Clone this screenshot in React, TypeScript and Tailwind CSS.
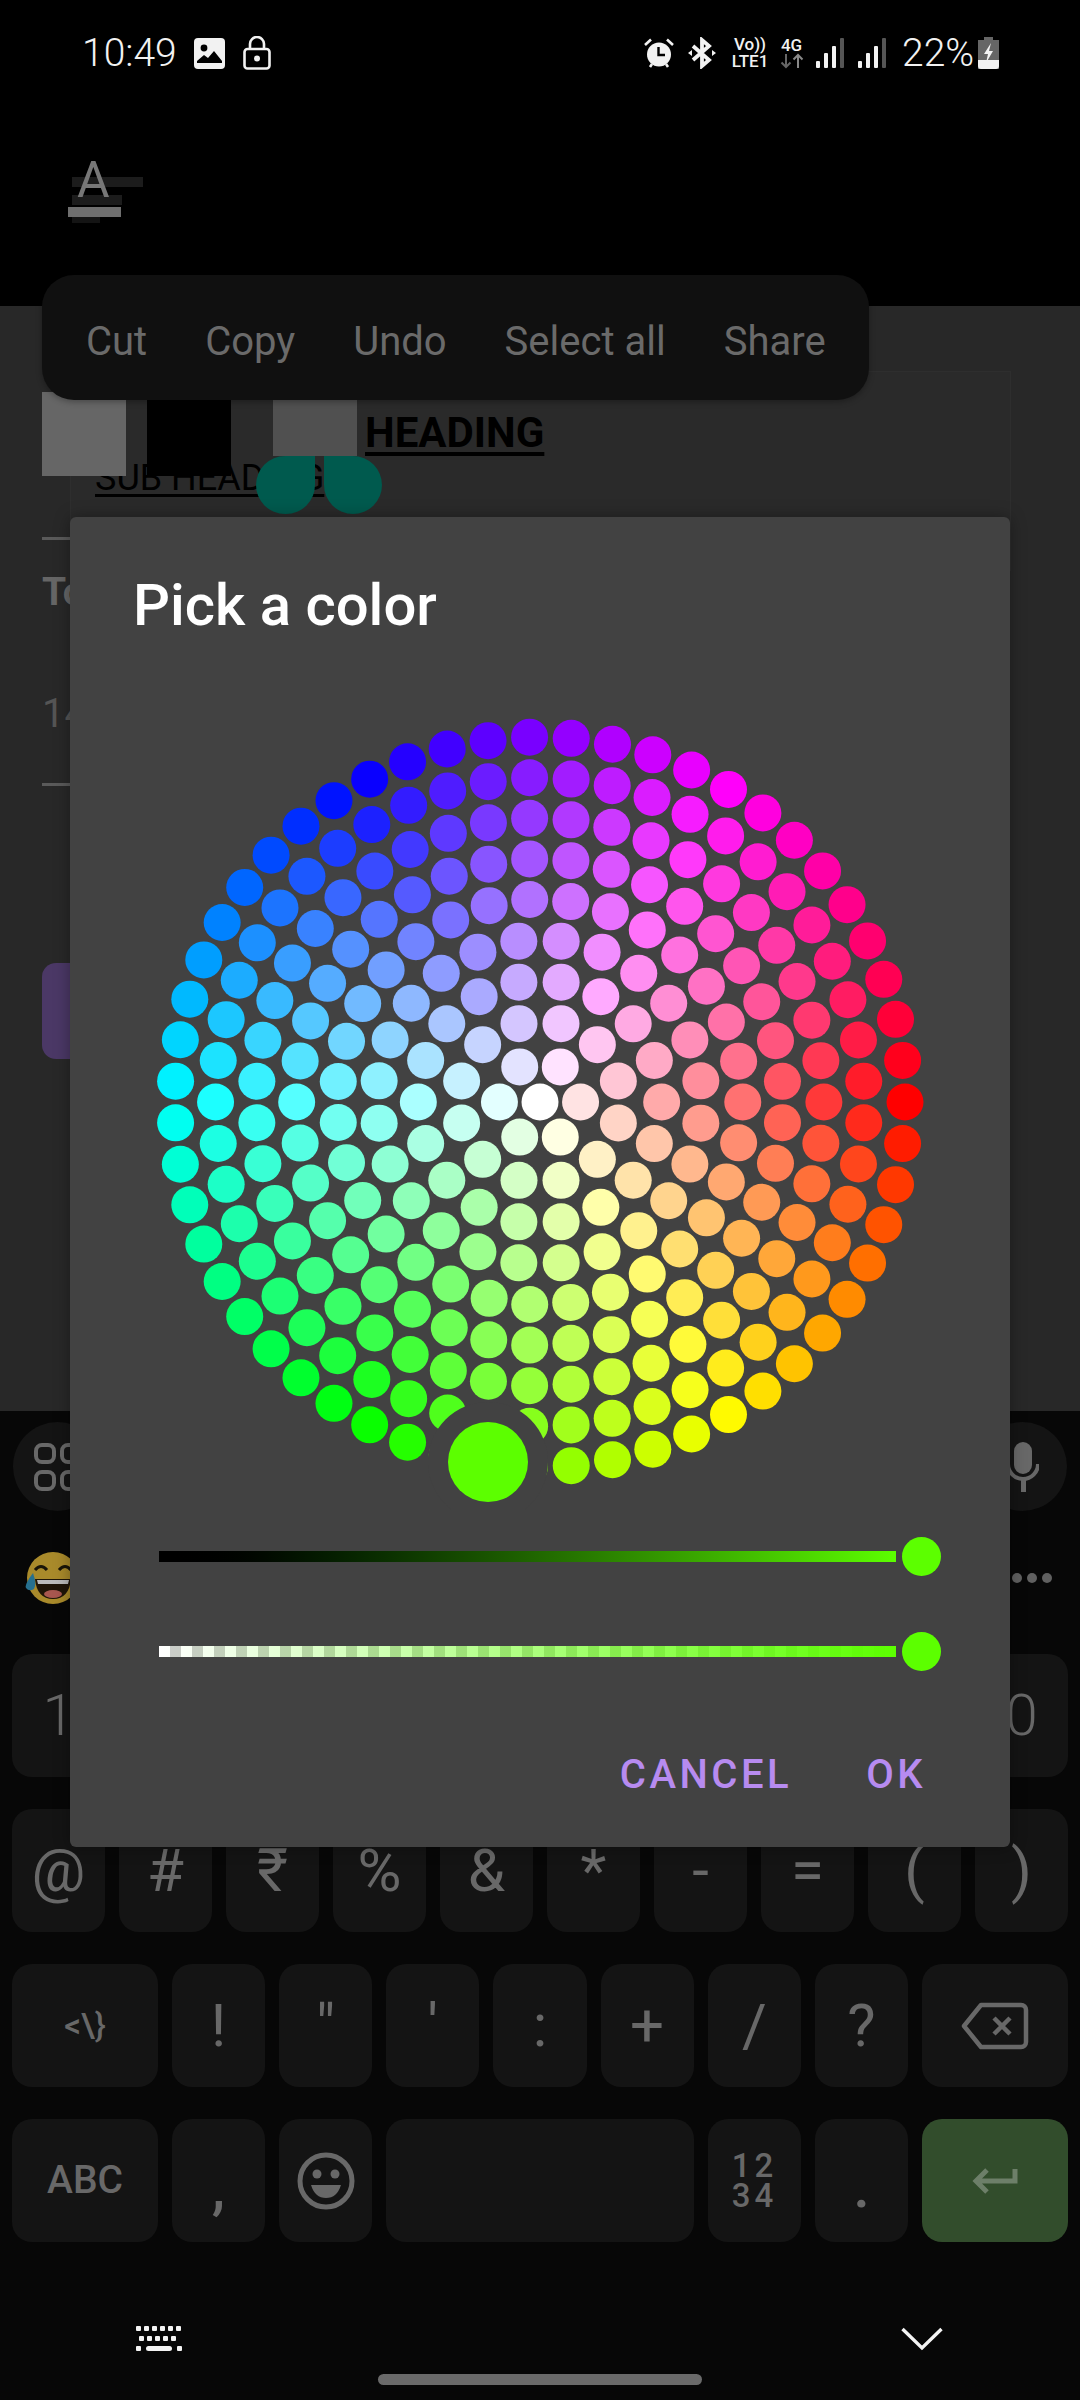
import type { ReactNode } from 'react';

const SIZE = 820;
const HALF = SIZE / 2;
const MAX_RADIUS = 365;
const DENSITY = 10;
const C_SIZE = MAX_RADIUS / (DENSITY - 1) / 2;
const DOT_RADIUS = 18.5;

function hsvToRgb(h: number, s: number, v: number) {
  const f = (n: number) => {
    const k = (n + h / 60) % 6;
    return Math.round(255 * (v - v * s * Math.max(0, Math.min(k, 4 - k, 1))));
  };
  return `rgb(${f(5)},${f(3)},${f(1)})`;
}

function buildDots() {
  const dots: { x: number; y: number; fill: string }[] = [];
  for (let i = 0; i < DENSITY; i++) {
    const radius = (MAX_RADIUS * i) / (DENSITY - 1);
    const total = i === 0 ? 1 : Math.max(1, Math.floor((0.975 * Math.PI) / Math.asin(C_SIZE / radius) + 0.5));
    for (let j = 0; j < total; j++) {
      const angle = (Math.PI * 2 * j) / total + (Math.PI / total) * ((i + 1) % 2);
      dots.push({
        x: HALF + radius * Math.cos(angle),
        y: HALF + 2 + radius * Math.sin(angle),
        fill: hsvToRgb((angle * 180) / Math.PI, radius / MAX_RADIUS, 1),
      });
    }
  }
  return dots;
}

function ColorWheel() {
  return (
    <svg width={SIZE} height={SIZE} viewBox={`0 0 ${SIZE} ${SIZE}`} className="shrink-0">
      {buildDots().map((d, i) => (
        <circle key={i} cx={d.x} cy={d.y} r={DOT_RADIUS} fill={d.fill} />
      ))}
      <circle cx={358} cy={772} r={60} fill="#424242" />
      <circle cx={358} cy={772} r={40} fill="#5cff00" />
    </svg>
  );
}

function Slider({ alpha }: { alpha?: boolean }) {
  return (
    <div className="flex items-center gap-[6px] pl-[89px]">
      <div
        className={
          alpha
            ? 'h-[11px] w-[737px] bg-[repeating-linear-gradient(90deg,#fff_0,#fff_11px,#ccc_11px,#ccc_22px)]'
            : 'h-[11px] w-[737px] bg-black'
        }
      >
        <div
          className={
            alpha
              ? 'h-full w-full bg-gradient-to-r from-transparent to-[#5cff00]'
              : 'h-full w-full bg-gradient-to-r from-black to-[#5cff00]'
          }
        />
      </div>
      <div className="h-[39px] w-[39px] rounded-full bg-[#5cff00]" />
    </div>
  );
}

function Key({
  children,
  className = 'flex-1',
  bg = 'bg-[#141414]',
}: {
  children?: ReactNode;
  className?: string;
  bg?: string;
}) {
  return (
    <div className={`flex h-[123px] items-center justify-center rounded-[20px] text-[#686868] ${bg} ${className}`}>
      {children}
    </div>
  );
}

function StatusBar() {
  return (
    <div className="flex h-[100px] shrink-0 items-center pl-[82px] pr-[81px] pt-[6px] text-[#f2f2f2]">
      <span className="w-[112px] text-[39px] font-light leading-none">10:49</span>
      <svg width="31" height="31" viewBox="0 0 31 31">
        <rect width="31" height="31" rx="4" fill="#f2f2f2" />
        <circle cx="10" cy="10" r="3.4" fill="#000" />
        <path d="M3 23 l7-6 4 3 6-7 8 10 v2 H3z" fill="#000" />
      </svg>
      <svg width="28" height="34" viewBox="0 0 28 34" className="ml-[18px]">
        <rect x="1.5" y="13" width="25" height="19.5" rx="3" fill="none" stroke="#f2f2f2" strokeWidth="2.6" />
        <path d="M7 13 V8 a7 7 0 0 1 14 0 V13" fill="none" stroke="#f2f2f2" strokeWidth="2.6" />
        <circle cx="14" cy="22.5" r="3" fill="#f2f2f2" />
      </svg>
      <div className="flex-1" />
      <svg width="30" height="31" viewBox="0 0 30 31" fill="#f2f2f2">
        <circle cx="15" cy="16.5" r="12" />
        <path d="M1 7 L7 1.5 M29 7 L23 1.5 M6 29 L8 26 M24 29 L22 26" stroke="#f2f2f2" strokeWidth="2.6" />
        <path d="M14.5 9 V17 H21" stroke="#000" strokeWidth="2.4" fill="none" />
      </svg>
      <svg width="28" height="32" viewBox="0 0 28 32" className="ml-[14px]" fill="#f2f2f2">
        <path d="M5 9 L21 23 L14 29 V3 L21 9 L5 23" fill="none" stroke="#f2f2f2" strokeWidth="3.8" />
        <path d="M0 16 L4 13 V19z M28 16 L24 13 V19z" />
      </svg>
      <div className="ml-[14px] flex w-[40px] flex-col items-center text-[17px] font-medium leading-[17px]">
        <span>Vo))</span>
        <span>LTE1</span>
      </div>
      <div className="ml-[9px] flex w-[25px] flex-col items-center text-[17px] font-medium leading-[15px]">
        <span>4G</span>
        <svg width="24" height="16" viewBox="0 0 24 16" fill="none" strokeWidth="2">
          <path d="M6 1 V14 M1.5 9.5 L6 14 L10.5 9.5" stroke="#666" />
          <path d="M18 15 V2 M13.5 6.5 L18 2 L22.5 6.5" stroke="#888" />
        </svg>
      </div>
      {[0, 1].map((n) => (
        <svg key={n} width="28" height="30" viewBox="0 0 28 30" className={n === 0 ? 'ml-[12px]' : 'ml-[14px]'}>
          <rect x="0" y="23" width="4" height="7" rx="1" fill="#f2f2f2" />
          <rect x="8" y="15" width="4" height="15" rx="1" fill="#f2f2f2" />
          <rect x="16" y="8" width="4" height="22" rx="1" fill="#f2f2f2" />
          <rect x="24" y="0" width="4" height="30" rx="1" fill="#555" />
        </svg>
      ))}
      <span className="ml-[16px] w-[72px] text-[39px] font-light leading-none">22%</span>
      <svg width="21" height="32" viewBox="0 0 21 32" className="ml-[4px]">
        <path d="M6 0 H15 V3 H21 V32 H0 V3 H6z" fill="#666" />
        <path d="M0 23 H21 V29 a3 3 0 0 1-3 3 H3 a3 3 0 0 1-3-3z" fill="#f2f2f2" />
        <path d="M13 6 L6 17 H10 L8 26 L15 14 H11z" fill="#f2f2f2" />
      </svg>
    </div>
  );
}

function AppBar() {
  return (
    <div className="relative h-[206px] shrink-0">
      <div className="absolute left-[72px] top-[77px] h-[10px] w-[71px] bg-[#1c1c1c]" />
      <div className="absolute left-[72px] top-[95px] h-[10px] w-[50px] bg-[#1c1c1c]" />
      <div className="absolute left-[68px] top-[107px] h-[10px] w-[53px] bg-[#6f6f6f]" />
      <div className="absolute left-[72px] top-[117px] h-[6px] w-[28px] bg-[#141414]" />
      <span className="absolute left-[77px] top-[45px] text-[50px] leading-[70px] text-[#777]">A</span>
    </div>
  );
}

function Editor() {
  return (
    <div className="relative h-[1105px] shrink-0 overflow-hidden bg-[#282828] pl-[42px] pr-[69px]">
      <div className="ml-[28px] mt-[65px] h-[200px] border border-[#2e2e2e] bg-[#2a2a2a]" />
      <div className="relative z-10 -mt-[179px] flex items-start">
        <div className="h-[84px] w-[84px] bg-[#666]" />
        <div className="ml-[21px] h-[84px] w-[84px] bg-black" />
        <div className="ml-[42px] h-[64px] w-[84px] bg-[#505050]" />
        <span className="ml-[8px] mt-[19px] text-[42px] font-bold leading-[44px] text-black underline underline-offset-[5px]">
          HEADING
        </span>
      </div>
      <div className="-mt-[19px] ml-[53px] text-[36px] leading-[42px] text-black underline underline-offset-[4px]">
        SUB HEADING
      </div>
      <div className="mt-[38px] h-[3px] w-[100px] bg-[#5a5a5a]" />
      <div className="mt-[29px] text-[39px] font-bold leading-[46px] text-[#666]">Total</div>
      <div className="mt-[76px] text-[40px] leading-[46px] text-[#555]">14</div>
      <div className="mt-[46px] h-[3px] w-[100px] bg-[#5a5a5a]" />
      <div className="mt-[177px] h-[96px] w-[200px] rounded-[14px] bg-[#4b3866]" />
    </div>
  );
}

function Keyboard() {
  return (
    <div className="flex flex-1 flex-col bg-[#070707]">
      <div className="mt-[11px] flex justify-between px-[13px]">
        <div className="flex h-[89px] w-[89px] items-center justify-center rounded-full bg-[#141414]">
          <svg width="48" height="48" viewBox="0 0 48 48" fill="none" stroke="#686868" strokeWidth="4">
            <rect x="2" y="2" width="18" height="17" rx="6" />
            <rect x="28" y="2" width="18" height="17" rx="6" />
            <rect x="2" y="29" width="18" height="17" rx="6" />
            <rect x="28" y="29" width="18" height="17" rx="6" />
          </svg>
        </div>
        <div className="flex h-[89px] w-[89px] items-center justify-center rounded-full bg-[#141414]">
          <svg width="32" height="50" viewBox="0 0 32 50" fill="#686868">
            <rect x="7" y="0" width="18" height="32" rx="9" />
            <path d="M1 22 a15 15 0 0 0 30 0" fill="none" stroke="#686868" strokeWidth="4" />
            <rect x="14" y="36" width="5" height="14" />
          </svg>
        </div>
      </div>
      <div className="mt-[40px] flex items-center justify-between pl-[25px] pr-[28px]">
        <svg width="54" height="54" viewBox="0 0 54 54">
          <circle cx="28" cy="27" r="26" fill="#a98a2b" />
          <path d="M10 19 q6-7 12 0 M34 19 q6-7 12 0" stroke="#1a1508" strokeWidth="3" fill="none" />
          <path d="M10 28 H46 Q44 48 28 48 Q12 48 10 28z" fill="#1f1508" />
          <path d="M12 29 H44 L43 33 H13z" fill="#bbb" />
          <ellipse cx="28" cy="43" rx="9" ry="4" fill="#a8574f" />
          <path d="M8 22 q-9 12 -7 15 q3 4 8 1 q3-5 -1-16z" fill="#26708f" />
        </svg>
        <div className="flex gap-[5px]">
          <div className="h-[10px] w-[10px] rounded-full bg-[#606060]" />
          <div className="h-[10px] w-[10px] rounded-full bg-[#606060]" />
          <div className="h-[10px] w-[10px] rounded-full bg-[#606060]" />
        </div>
      </div>
      <div className="mt-[49px] flex flex-col gap-[32px] px-[12px]">
        <div className="flex gap-[14px] text-[58px] font-light">
          {['1', '2', '3', '4', '5', '6', '7', '8', '9', '0'].map((k) => (
            <Key key={k}>{k}</Key>
          ))}
        </div>
        <div className="flex gap-[14px] text-[60px]">
          {['@', '#', '₹', '%', '&', '*', '-', '=', '(', ')'].map((k) => (
            <Key key={k}>{k}</Key>
          ))}
        </div>
        <div className="flex gap-[14px] text-[60px]">
          <Key className="w-[146px] shrink-0 text-[33px] font-medium">{'<\\}'}</Key>
          {['!', '"', "'", ':', '+', '/', '?'].map((k) => (
            <Key key={k}>{k}</Key>
          ))}
          <Key className="w-[146px] shrink-0">
            <svg width="68" height="48" viewBox="0 0 68 48" fill="none" stroke="#686868" strokeWidth="4.5">
              <path d="M20 3 H60 a5 5 0 0 1 5 5 V40 a5 5 0 0 1-5 5 H20 L3 24z" strokeLinejoin="round" />
              <path d="M33 16 L49 32 M49 16 L33 32" />
            </svg>
          </Key>
        </div>
        <div className="flex gap-[14px] text-[60px]">
          <Key className="w-[146px] shrink-0 text-[39px] font-medium">ABC</Key>
          <Key className="w-[93px] shrink-0">
            <span className="pt-[14px] font-medium">,</span>
          </Key>
          <Key className="w-[93px] shrink-0">
            <svg width="58" height="58" viewBox="0 0 58 58" fill="none" stroke="#686868" strokeWidth="5">
              <circle cx="29" cy="29" r="26" />
              <circle cx="20" cy="22" r="4.5" fill="#686868" stroke="none" />
              <circle cx="38" cy="22" r="4.5" fill="#686868" stroke="none" />
              <path d="M14 33 H44 Q40 46 29 46 Q18 46 14 33z" fill="#686868" stroke="none" />
            </svg>
          </Key>
          <Key className="flex-1" />
          <Key className="w-[93px] shrink-0">
            <span className="text-center text-[33px] font-medium leading-[30px] tracking-[4px]">
              12
              <br />
              34
            </span>
          </Key>
          <Key className="w-[93px] shrink-0">
            <span className="pt-[12px] font-medium">.</span>
          </Key>
          <Key className="w-[146px] shrink-0" bg="bg-[#324d2c]">
            <svg width="46" height="26" viewBox="0 0 46 26" fill="none" stroke="#6d7f69" strokeWidth="5">
              <path d="M43 1 V13 H5 M15 2 L4 13 L15 24" />
            </svg>
          </Key>
        </div>
      </div>
      <div className="mt-[84px] flex items-center justify-between pl-[135px] pr-[137px]">
        <svg width="48" height="26" viewBox="0 0 48 26" fill="#f4f4f4">
          {[0, 8, 16, 24, 32, 40].map((x) => (
            <rect key={x} x={x + 1} y="0" width="5" height="5" rx="1" />
          ))}
          {[4, 12, 20, 28, 36].map((x) => (
            <rect key={x} x={x} y="10" width="5" height="5" rx="1" />
          ))}
          <rect x="1" y="20" width="5" height="5" rx="1" />
          <rect x="11" y="20" width="26" height="5" rx="2.5" />
          <rect x="42" y="20" width="5" height="5" rx="1" />
        </svg>
        <svg width="42" height="24" viewBox="0 0 42 24" fill="none" stroke="#f4f4f4" strokeWidth="3.4">
          <path d="M1.5 2 L21 21 L40.5 2" />
        </svg>
      </div>
      <div className="mx-auto mt-[22px] h-[11px] w-[324px] rounded-full bg-[#6a6a6a]" />
    </div>
  );
}

export default function App() {
  return (
    <div className="relative flex h-[2400px] w-[1080px] flex-col overflow-hidden bg-black font-['Roboto',sans-serif]">
      <StatusBar />
      <AppBar />
      <Editor />
      <Keyboard />

      {/* text selection handles */}
      <div className="absolute left-[256px] top-[456px] z-20 h-[58px] w-[59px] rounded-b-[30px] rounded-tl-[30px] bg-[#005a4e]" />
      <div className="absolute left-[324px] top-[456px] z-20 h-[58px] w-[58px] rounded-b-[30px] rounded-tr-[30px] bg-[#005a4e]" />

      {/* floating text toolbar */}
      <div className="absolute left-[42px] top-[275px] z-20 flex h-[125px] w-[827px] items-center gap-[58px] rounded-[32px] bg-[#101010] pl-[44px] pt-[8px] text-[40px] text-[#6a6a6a] shadow-[0_2px_6px_rgba(0,0,0,0.3)]">
        <span>Cut</span>
        <span>Copy</span>
        <span>Undo</span>
        <span>Select all</span>
        <span>Share</span>
      </div>

      {/* color picker dialog */}
      <div className="absolute left-[70px] top-[517px] z-20 flex h-[1330px] w-[940px] flex-col rounded-[6px] bg-[#424242] shadow-[0_0_16px_rgba(0,0,0,0.35)]">
        <div className="h-[173px] pl-[63px] pt-[55px] text-[58px] font-medium leading-[66px] text-white">Pick a color</div>
        <div className="flex justify-center">
          <ColorWheel />
        </div>
        <div className="mt-[27px] flex flex-col gap-[56px]">
          <Slider />
          <Slider alpha />
        </div>
        <div className="mt-[81px] flex justify-end gap-[74px] pr-[84px] text-[40px] font-medium leading-[46px] tracking-[3.5px] text-[#b78bf0]">
          <span>CANCEL</span>
          <span>OK</span>
        </div>
      </div>
    </div>
  );
}
